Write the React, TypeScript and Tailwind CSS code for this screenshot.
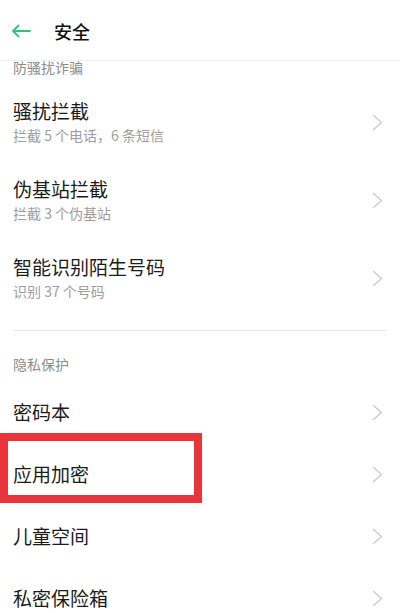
import React from "react";

const Chevron = () => (
  <svg width="11" height="17" viewBox="0 0 11 17" fill="none" className="shrink-0">
    <polyline points="1.5,1.5 9.5,8.5 1.5,15.5" stroke="#c9c9c9" strokeWidth="1.3" strokeLinecap="round" strokeLinejoin="round" />
  </svg>
);

const SubItem = ({ title, sub }: { title: string; sub: string }) => (
  <div className="flex items-center justify-between pl-[13px] pr-[17px] h-[78px]">
    <div className="flex flex-col gap-[3px]">
      <div className="text-[19px] leading-[24px] text-[#1b1b1b]">{title}</div>
      <div className="text-[14px] leading-[19px] text-[#9d9d9d]">{sub}</div>
    </div>
    <Chevron />
  </div>
);

const Item = ({ title, boxed }: { title: string; boxed?: boolean }) => (
  <div className="relative flex items-center justify-between pl-[13px] pr-[17px] h-[62px]">
    <div className="text-[19px] leading-[24px] text-[#1b1b1b]">{title}</div>
    <Chevron />
    {boxed && (
      <div className="absolute left-0 top-[-10px] w-[202px] h-[70px] border-[8px] border-[#e8353b]" />
    )}
  </div>
);

export default function App() {
  return (
    <div
      className="w-[400px] h-[613px] overflow-hidden bg-white"
      style={{ fontFamily: '"Noto Sans CJK SC", "Noto Sans", sans-serif' }}
    >
      <div className="h-[61px] flex items-center border-b border-[#f0f0f0]">
        <svg width="20" height="14" viewBox="0 0 20 14" fill="none" className="ml-[11px] mt-[2px]">
          <path d="M19 7H2M7.5 1.5L2 7l5.5 5.5" stroke="#34c17f" strokeWidth="1.8" strokeLinecap="round" strokeLinejoin="round" />
        </svg>
        <div className="ml-[23px] text-[18px] leading-[24px] font-medium text-[#111] mt-[2px]">安全</div>
      </div>
      <div className="pl-[13px] text-[14px] leading-[12px] text-[#8c8c8c]">防骚扰诈骗</div>
      <div className="mt-[10px]">
        <SubItem title="骚扰拦截" sub="拦截 5 个电话，6 条短信" />
        <SubItem title="伪基站拦截" sub="拦截 3 个伪基站" />
        <SubItem title="智能识别陌生号码" sub="识别 37 个号码" />
      </div>
      <div className="mt-[13px] mx-[13px] h-px bg-[#ebebeb]" />
      <div className="mt-[23px] pl-[13px] text-[14px] leading-[20px] text-[#8c8c8c]">隐私保护</div>
      <div className="mt-[7px]">
        <Item title="密码本" />
        <Item title="应用加密" boxed />
        <Item title="儿童空间" />
        <Item title="私密保险箱" />
      </div>
    </div>
  );
}
